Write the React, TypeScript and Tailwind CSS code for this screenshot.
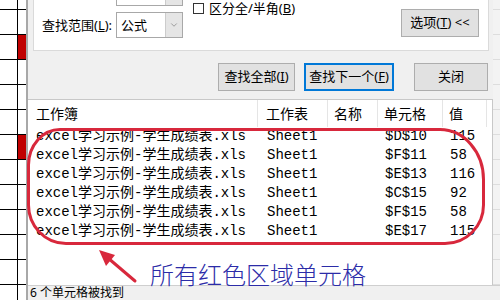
import { ChevronDown } from "lucide-react";

const ui = "font-['Noto_Sans','Noto_Sans_CJK_SC',sans-serif]";
const mono = "font-['Liberation_Mono','Noto_Sans_CJK_SC',monospace]";

const RESULTS = [
    { cell: "$D$10", value: "115" },
    { cell: "$F$11", value: "58" },
    { cell: "$E$13", value: "116" },
    { cell: "$C$15", value: "92" },
    { cell: "$F$15", value: "58" },
    { cell: "$E$17", value: "115" },
];

// spreadsheet rows peeking out behind the dialog
const SHEET_ROWS = Array.from({ length: 11 });
const RED_ROWS = [1, 5];

function SheetStrip() {
    return (
        <div className="w-[28px] h-full flex flex-col bg-white border-r-2 border-[#a8a8a8] overflow-hidden">
            <div className="h-[10px] shrink-0 flex border-b border-black">
                <div className="w-[18px] border-r border-black" />
                <div className="flex-1" />
            </div>
            {SHEET_ROWS.map((_, i) => (
                <div key={i} className="h-[25px] shrink-0 flex border-b border-black">
                    <div className="w-[18px] border-r border-black" />
                    <div className={RED_ROWS.includes(i) ? "flex-1 bg-[#c00000]" : "flex-1"} />
                </div>
            ))}
            <div className="flex-1 flex">
                <div className="w-[18px] border-r border-black" />
            </div>
        </div>
    );
}

function Btn({ label, width, active }: { label: React.ReactNode; width: string; active?: boolean }) {
    return (
        <div
            className={`${width} h-[28px] flex items-center justify-center bg-[#e1e1e1] text-[13px] text-black ${
                active ? "border-2 border-[#0078d7]" : "border border-[#adadad]"
            }`}
        >
            {label}
        </div>
    );
}

export default function App() {
    return (
        <div className={`relative w-[500px] h-[300px] flex bg-white overflow-hidden ${ui}`}>
            <SheetStrip />

            <div className="flex-1 flex flex-col bg-[#f0f0f0]">
                <div className="flex-1 flex min-h-0">
                    <div className="w-[465px] flex flex-col">
                        {/* Options panel */}
                        <div className="h-[51px] shrink-0 pl-[5px] pr-[4px]">
                            <div className="h-full bg-white border-x border-b border-[#dadada] flex items-start">
                                <div className="w-[82px] pl-[8px] pt-[16px] text-[13px] leading-[18px] whitespace-nowrap">
                                    查找范围(<span className="underline">L</span>):
                                </div>
                                <div className="w-[67px] flex flex-col">
                                    <div className="h-[6px] flex border-x border-b border-[#a8a8a8]">
                                        <div className="flex-1 bg-white" />
                                        <div className="w-[17px] bg-[#e5e5e5] border-l border-[#cccccc]" />
                                    </div>
                                    <div className="mt-[6px] h-[26px] flex border border-[#a8a8a8] bg-white">
                                        <div className="flex-1 pl-[4px] text-[13px] leading-[24px]">公式</div>
                                        <div className="w-[17px] bg-[#e5e5e5] border-l border-[#cccccc] flex items-center justify-center">
                                            <ChevronDown size={10} strokeWidth={1.5} className="text-[#707070]" />
                                        </div>
                                    </div>
                                </div>
                                <div className="ml-[10px] pt-[2px] flex items-center gap-[5px] text-[13px] leading-[12px] whitespace-nowrap">
                                    <div className="w-[11px] h-[11px] border border-[#333333] bg-white" />
                                    <span>
                                        区分全/半角(<span className="underline">B</span>)
                                    </span>
                                </div>
                                <div className="ml-auto mr-[9px] mt-[9px]">
                                    <Btn
                                        width="w-[78px]"
                                        label={
                                            <span>
                                                选项(<span className="underline">T</span>) &lt;&lt;
                                            </span>
                                        }
                                    />
                                </div>
                            </div>
                        </div>

                        {/* Action buttons */}
                        <div className="h-[48px] shrink-0 flex items-start justify-end pt-[12px] pr-[5px]">
                            <Btn width="w-[77px]" label={<span>查找全部(<span className="underline">I</span>)</span>} />
                            <div className="w-[9px]" />
                            <Btn width="w-[90px]" active label={<span>查找下一个(<span className="underline">F</span>)</span>} />
                            <div className="w-[20px]" />
                            <Btn width="w-[74px]" label="关闭" />
                        </div>

                        {/* Results list */}
                        <div className="flex-1 bg-white border-t border-r border-[#c8c8c8] flex flex-col">
                            <div className="h-[27px] shrink-0 flex text-[14px] leading-[27px]">
                                <div className="w-[230px] pl-[8px] border-r border-[#e5e5e5]">工作簿</div>
                                <div className="w-[70px] pl-[8px] border-r border-[#e5e5e5]">工作表</div>
                                <div className="w-[50px] pl-[6px] border-r border-[#e5e5e5]">名称</div>
                                <div className="w-[65px] pl-[6px] border-r border-[#e5e5e5]">单元格</div>
                                <div className="w-[44px] pl-[6px] border-r border-[#e5e5e5]">值</div>
                            </div>
                            {RESULTS.map((r) => (
                                <div key={r.cell} className={`h-[19px] shrink-0 flex text-[14px] leading-[19px] whitespace-nowrap ${mono}`}>
                                    <div className="w-[230px] pl-[8px]">excel学习示例-学生成绩表.xls</div>
                                    <div className="w-[70px] pl-[9px]">Sheet1</div>
                                    <div className="w-[50px]" />
                                    <div className="w-[65px] pl-[7px]">{r.cell}</div>
                                    <div className="w-[44px] pl-[7px]">{r.value}</div>
                                </div>
                            ))}
                        </div>
                    </div>

                    {/* sheet behind, right edge */}
                    <div className="flex-1 flex flex-col bg-[#f3f3f3]">
                        <div className="h-[10px] shrink-0 border-b border-[#dddddd]" />
                        {SHEET_ROWS.map((_, i) => (
                            <div key={i} className="h-[25px] shrink-0 border-b border-[#dddddd]" />
                        ))}
                    </div>
                </div>

                {/* Status bar */}
                <div className="h-[15px] shrink-0 border-t border-[#cfcfcf] pl-[2px] overflow-hidden">
                    <div className="text-[12px] leading-[14px] whitespace-nowrap">6 个单元格被找到</div>
                </div>
            </div>

            {/* Annotation: red outline + arrow */}
            <svg className="absolute inset-0 pointer-events-none" width="500" height="300" viewBox="0 0 500 300">
                <path
                    d="M 60 129.5 L 440 129.5 A 43.5 50 0 0 1 483.5 179.5 L 483.5 205 A 38.5 38.5 0 0 1 445 243.5 L 66 243.5 A 37.5 38.5 0 0 1 28.5 205 L 28.5 165 A 31.5 35.5 0 0 1 60 129.5 Z"
                    fill="none"
                    stroke="#d8283c"
                    strokeWidth="3"
                />
                <line x1="135" y1="281" x2="108" y2="258" stroke="#d8283c" strokeWidth="3" strokeLinecap="round" />
                <polygon points="99,250 115,255 106,266" fill="#d8283c" />
            </svg>
            <div className="absolute left-[150px] top-[262px] text-[24px] leading-[28px] font-light text-[#2c2ca8] whitespace-nowrap font-['Liberation_Serif','Noto_Sans_CJK_SC',serif]">
                所有红色区域单元格
            </div>
        </div>
    );
}
